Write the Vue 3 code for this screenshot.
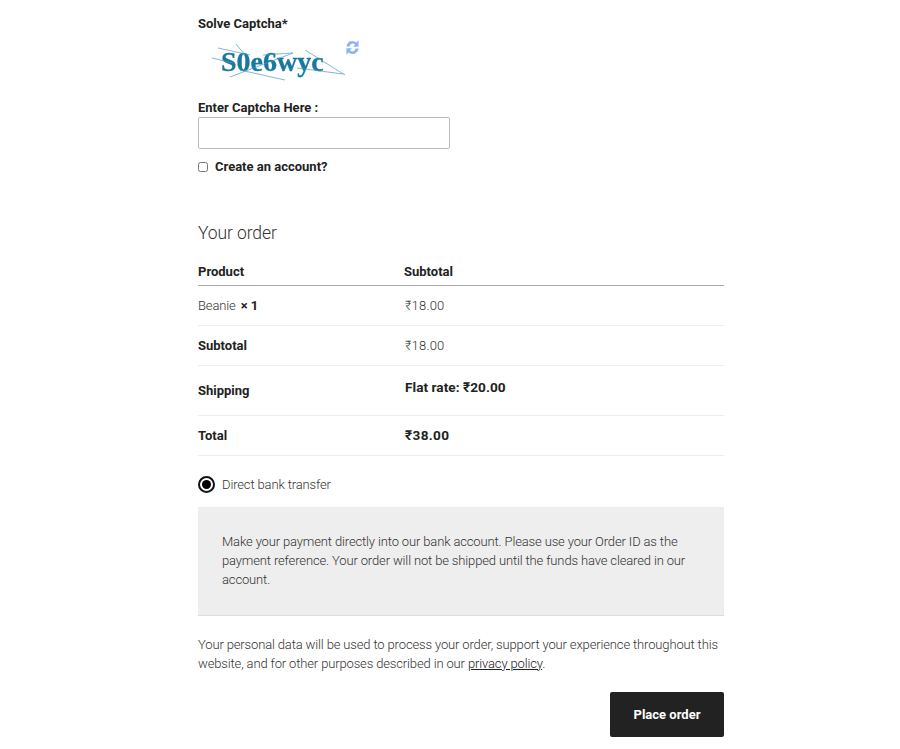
<script setup>
const rows = [
  { head: 'Subtotal', value: '₹18.00', cls: 'r40' },
]
</script>

<template>
  <main class="page">
    <div class="captcha-label">Solve Captcha*</div>
    <div class="captcha-row">
      <svg class="captcha" width="140" height="44" viewBox="0 0 140 44">
        <text x="16" y="31" class="captcha-text">S0e6wyc</text>
        <g stroke="#4a9ac0" stroke-width="0.7" fill="none">
          <path d="M7 18 L28 23" />
          <path d="M13 8 L45 15" />
          <path d="M31 4 L40 15" />
          <path d="M25 37 L88 13" />
          <path d="M35 30 L80 40" />
          <path d="M58 15 L88 13" />
          <path d="M100 10 L140 35" />
          <path d="M92 28 L138 34" />
        </g>
      </svg>
      <svg class="refresh" width="13" height="15" viewBox="1 1.7 12 12.6" preserveAspectRatio="none">
        <path d="M1.4 7.2 A5.6 5.6 0 0 1 10.6 3.9 L12.6 2 V7.4 H7.6 L9.3 5.6 A3 3 0 0 0 4.2 7.2 Z" fill="#8fb4ef" />
        <path d="M12.6 8.8 A5.6 5.6 0 0 1 3.4 12.1 L1.4 14 V8.6 H6.4 L4.7 10.4 A3 3 0 0 0 9.8 8.8 Z" fill="#8fb4ef" />
      </svg>
    </div>
    <label class="enter-label">Enter Captcha Here :</label>
    <input class="text-input" type="text" />
    <label class="account">
      <input type="checkbox" class="check" />
      <span>Create an account?</span>
    </label>

    <h3 class="order-title">Your order</h3>
    <table class="order">
      <thead>
        <tr class="head"><th class="c1">Product</th><th>Subtotal</th></tr>
      </thead>
      <tbody>
        <tr class="r40"><td class="c1">Beanie <strong class="qty">×&nbsp;1</strong></td><td class="val">₹18.00</td></tr>
      </tbody>
      <tfoot>
        <tr v-for="r in rows" :key="r.head" :class="r.cls"><th class="c1">{{ r.head }}</th><td class="val">{{ r.value }}</td></tr>
        <tr class="ship"><th class="c1">Shipping</th><td class="val strong top">Flat rate: ₹20.00</td></tr>
        <tr class="r40"><th class="c1">Total</th><td class="val strong total">₹38.00</td></tr>
      </tfoot>
    </table>

    <div class="method">
      <span class="radio"><span class="dot"></span></span>
      <span>Direct bank transfer</span>
    </div>
    <div class="note">Make your payment directly into our bank account. Please use your Order ID as the payment reference. Your order will not be shipped until the funds have cleared in our account.</div>
    <p class="privacy">Your personal data will be used to process your order, support your experience throughout this website, and for other purposes described in our <a class="link">privacy policy</a>.</p>
    <div class="actions"><button class="place" type="button">Place order</button></div>
  </main>
</template>

<style scoped>
.page {
  width: 526px;
  margin: 0 auto 0 198px;
  padding-top: 14px;
  font-family: Roboto, "Liberation Sans", sans-serif;
  font-size: 13px;
  font-weight: 300;
  letter-spacing: -0.14px;
  line-height: 19px;
  color: #333;
}
.captcha-label, .enter-label {
  display: block;
  font-weight: 700;
  letter-spacing: 0;
  color: #222;
}
.captcha-row {
  display: flex;
  align-items: flex-start;
  margin-top: 3px;
  padding-top: 4px;
  padding-left: 7px;
  box-sizing: border-box;
  height: 50px;
}
.captcha { display: block; filter: blur(0.3px); }
.captcha-text {
  font-family: "Liberation Serif", serif;
  font-size: 28px;
  font-weight: 700;
  letter-spacing: 0;
  fill: #1878a0;
  stroke: #1878a0;
  stroke-width: 0.3px;
}
.refresh { margin-left: 1px; margin-top: 0; }
.enter-label { margin-top: 12px; }
.text-input {
  display: block;
  box-sizing: border-box;
  width: 252px;
  height: 32px;
  margin-top: 0;
  border: 1px solid #bbb;
  border-radius: 2px;
  background: #fff;
}
.account {
  display: flex;
  align-items: center;
  margin-top: 8px;
  font-weight: 700;
  letter-spacing: 0;
  color: #222;
}
.check { width: 10px; height: 10px; margin: 0 7px 0 0; padding: 0; accent-color: #333; }
.order-title {
  margin: 45px 0 0;
  font-size: 17.5px;
  line-height: 24px;
  font-weight: 300;
  letter-spacing: -0.1px;
  color: #333;
}
.order { width: 100%; border-collapse: collapse; margin-top: 13px; table-layout: fixed; }
.order th { font-weight: 700; letter-spacing: 0; color: #222; text-align: left; padding: 0; }
.order td { padding: 0; }
.c1 { width: 206px; }
.head { height: 27px; border-bottom: 1px solid #aaa; }
.r40 { height: 40px; border-bottom: 1px solid #eee; }
.ship { height: 50px; border-bottom: 1px solid #eee; }
.val { padding-left: 1px !important; letter-spacing: 0.2px; }
.order .strong { font-weight: 700; font-size: 13.6px; letter-spacing: 0.05px; color: #222; }
.order .total { letter-spacing: 0.35px; }
.order .top { vertical-align: top; padding-top: 12px; }
.qty { font-weight: 700; letter-spacing: 0; color: #222; margin-left: 2px; }
.method {
  display: flex;
  align-items: center;
  gap: 7px;
  margin-top: 19px;
  height: 20px;
}
.radio {
  box-sizing: border-box;
  display: flex;
  align-items: center;
  justify-content: center;
  width: 17px;
  height: 17px;
  border: 2px solid #111;
  border-radius: 50%;
}
.dot { width: 9px; height: 9px; border-radius: 50%; background: #000; }
.note {
  box-sizing: border-box;
  margin-top: 12px;
  height: 109px;
  padding: 25px 24px 0;
  background: #eee;
  border-bottom: 1px solid #ddd;
}
.privacy { margin: 19px 0 0; }
.link { color: #222; text-decoration: underline; }
.actions { display: flex; justify-content: flex-end; margin-top: 19px; }
.place {
  width: 114px;
  height: 45px;
  border: 0;
  border-radius: 2px;
  background: #222;
  color: #fff;
  font: 700 13px Roboto, "Liberation Sans", sans-serif;
}
</style>
